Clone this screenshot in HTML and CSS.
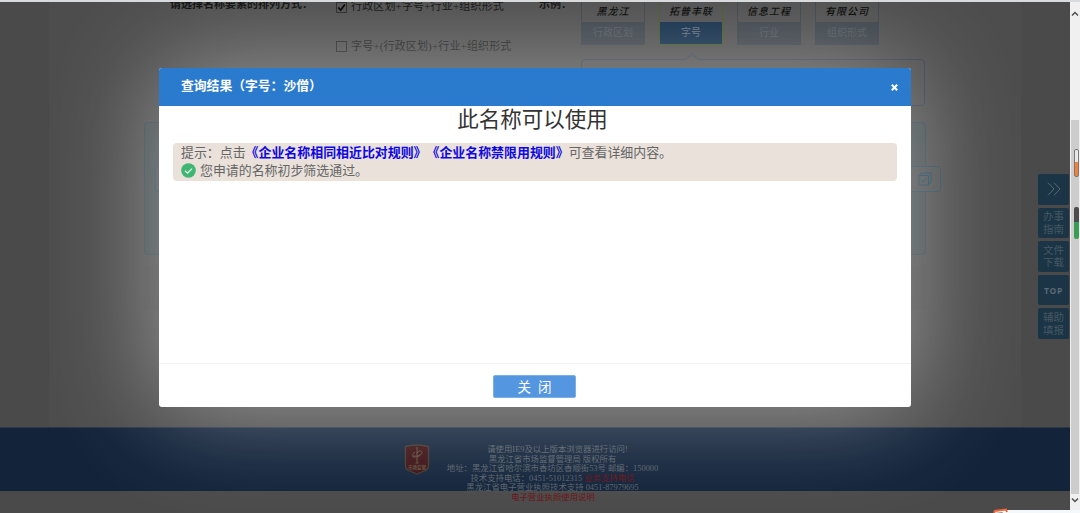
FILE: index.html
```html
<!DOCTYPE html>
<html lang="zh-CN">
<head>
  <meta charset="UTF-8">
  <title>企业名称查询</title>
  <link rel="stylesheet" href="styles.css">
</head>
<body>
  <div class="page">
    <div class="content">
      <div class="rule-row">
        <div class="rule-label">请选择名称要素的排列方式：</div>
        <div class="options">
          <div class="option">
            <svg class="check" viewBox="0 0 11 11"><rect x=".5" y=".5" width="10" height="10"/><path class="tick" d="M2.3 5.5l2.4 2.6 4.2-5.6"/></svg>
            <span>行政区划+字号+行业+组织形式</span>
          </div>
          <div class="option option-off">
            <svg class="check" viewBox="0 0 11 11"><rect x=".5" y=".5" width="10" height="10"/></svg>
            <span>字号+(行政区划)+行业+组织形式</span>
          </div>
        </div>
        <div class="example-label">示例：</div>
        <div class="cards">
          <div class="card"><b>黑龙江</b><span>行政区划</span></div>
          <div class="card active"><b>拓普丰联</b><span>字号</span></div>
          <div class="card"><b>信息工程</b><span>行业</span></div>
          <div class="card"><b>有限公司</b><span>组织形式</span></div>
        </div>
      </div>
      <svg class="callout" viewBox="0 0 344 53"><path d="M3 6.500h102l6-6 6 6h224l2.500 2.500v41l-2.500 2.500H3L.5 50V9z"/></svg>
      <div class="panel">
        <div class="name-input">
          <svg width="14" height="14" viewBox="0 0 14 14"><path d="M1 3.500h9.500V13H1zM3 3.500V1h10v10h-2.500M3.200 8l2 2.200L8.700 6"/></svg>
        </div>
      </div>
      <div class="panel-sub"></div>
    </div>
    <div class="footer">
      <svg class="badge" viewBox="0 0 26 31">
        <path class="shield" d="M1.500 2.500Q13-.5 24.500 2.500V22q0 3-3 4.500L13 30l-8.500-3.500q-3-1.500-3-4.500z"/>
        <path class="mark" d="M13 3v16M11 8.500c-3 1-4 3-1 3.500s8-1 8-3.500-4-2-5 1M8 12c2 2 8 1 9-2M11.500 19h3"/>
        <text x="13" y="24.500">市场监管</text>
      </svg>
      <div class="footer-text">
        <p class="browser">请使用IE9及以上版本浏览器进行访问!</p>
        <p>黑龙江省市场监督管理局 版权所有</p>
        <p>地址：黑龙江省哈尔滨市香坊区香顺街53号 邮编：150000</p>
        <p>技术支持电话：0451-51012315 <a>业务支持电话</a></p>
        <p>黑龙江省电子营业执照技术支持 0451-87979695</p>
      </div>
    </div>
    <div class="below"><a>电子营业执照使用说明</a></div>

    <div class="side-menu">
      <div><svg width="14" height="14" viewBox="0 0 14 14"><path d="M1 .7L7 7l-6 6.300M7 .7L13 7l-6 6.300"/></svg></div>
      <div>办事<br>指南</div>
      <div>文件<br>下载</div>
      <div class="top">TOP</div>
      <div>辅助<br>填报</div>
    </div>

    <div class="modal">
      <div class="modal-header">
        <span>查询结果（字号：沙僧）</span>
        <svg width="7" height="7" viewBox="0 0 7 7"><path d="M.8.8l5.400 5.400M6.200.8L.8 6.200"/></svg>
      </div>
      <div class="modal-body">
        <h1>此名称可以使用</h1>
        <div class="tip">
          <p>提示：点击<a>《企业名称相同相近比对规则》</a><a>《企业名称禁限用规则》</a>可查看详细内容。</p>
          <p class="pass"><svg width="15" height="15" viewBox="0 0 15 15"><circle cx="7.500" cy="7.500" r="7.300"/><path d="M4 7.700l2.500 2.400L11 5.600"/></svg>您申请的名称初步筛选通过。</p>
        </div>
      </div>
      <div class="modal-footer"><button>关 闭</button></div>
    </div>
  </div>

  <div class="scrollbar">
    <svg class="arrow" viewBox="0 0 10 6"><path d="M2 4.500l3-3 3 3"/></svg>
    <div class="thumb"></div>
    <svg class="arrow" viewBox="0 0 10 6"><path d="M2 1.500l3 3 3-3"/></svg>
  </div>
  <div class="gauge gauge-orange"></div>
  <div class="gauge gauge-green"></div>
  <svg class="ime" viewBox="0 0 88 5"><path class="ime-bar" d="M14 2h74v3H10z"/><path class="ime-logo" d="M2 5l1-2 11-1.500L15 4"/></svg>
</body>
</html>
```

FILE: styles.css
```css
* {
  box-sizing: border-box;
}
body {
  margin: 0;
  width: 1080px;
  height: 513px;
  overflow: hidden;
  position: relative;
  display: flex;
  border-top: 2px solid #d9dadb;
  background: #f0f0f0;
  font-family: "Liberation Serif", "Noto Sans CJK SC", serif;
  text-spacing-trim: space-all;
}
p, h1 {
  margin: 0;
  font-weight: normal;
}
svg {
  fill: none;
  flex: none;
}
.page {
  position: relative;
  width: 1070px;
  height: 511px;
  overflow: hidden;
  background: #4a4a4a;
}
.content {
  width: 972px;
  height: 425px;
  margin-left: 49px;
  background: #4d4d4d;
}

/* name rule */
.rule-row {
  display: flex;
  height: 51px;
  padding-left: 121px;
  font-size: 11px;
  line-height: 14px;
  color: #0c0c0c;
}
.rule-label,
.example-label {
  font-weight: bold;
  margin-top: -5px;
}
.rule-label {
  width: 166px;
}
.options {
  width: 203px;
  margin-top: -3px;
}
.option {
  display: flex;
  gap: 4px;
  height: 40px;
  white-space: nowrap;
  letter-spacing: .15px;
}
.option-off {
  color: #1c1c1c;
}
.check {
  width: 11px;
  height: 11px;
  margin-top: 3px;
  stroke: #262626;
}
.option-off .check {
  margin-top: 2px;
}
.check .tick {
  stroke: #000;
  stroke-width: 1.8;
}
.example-label {
  width: 42px;
}
.cards {
  display: flex;
  gap: 14px;
}
.card {
  width: 64px;
  height: 43px;
  border: 1px solid #3a4148;
  border-top: 0;
  background: #3a4148;
  text-align: center;
}
.card b {
  display: block;
  height: 20px;
  line-height: 17px;
  background: #4d4d4d;
  color: #000;
  font-family: "Noto Sans CJK SC", sans-serif;
  font-size: 10px;
  font-style: italic;
  font-weight: 500;
  letter-spacing: 1px;
}
.card span {
  display: block;
  line-height: 21px;
  font-size: 10px;
  color: #50565b;
}
.card.active {
  border: 1px solid #40591f;
  border-top: 0;
  background: #0f2b48;
}
.card.active span {
  color: #5f6d7a;
}
.callout {
  display: block;
  width: 344px;
  height: 53px;
  margin-left: 532px;
  stroke: #334153;
}
.panel {
  width: 782px;
  height: 133px;
  margin: 16px 0 0 95px;
  padding: 43px 0 0 10px;
  border: 1px solid #344a50;
  border-radius: 4px;
  background: #454d4f;
}
.name-input {
  display: flex;
  align-items: center;
  justify-content: flex-end;
  width: 786px;
  height: 26px;
  padding-right: 8px;
  border: 1px solid #2c4b5b;
  border-radius: 3px;
  background: #4c4e4f;
  stroke: #1c485e;
}
.panel-sub {
  width: 782px;
  height: 45px;
  margin: 10px 0 0 95px;
  background: #4b4b4b;
}

/* footer */
.footer {
  display: flex;
  height: 64px;
  padding-left: 404px;
  border-top: 1px solid #2c3743;
  background: #12233a;
  overflow: hidden;
}
.badge {
  width: 26px;
  height: 31px;
  margin-top: 16px;
}
.badge .shield {
  fill: #3b1013;
  stroke: #44382e;
  stroke-width: 1.3;
}
.badge .mark {
  stroke: #5f4c3e;
}
.badge text {
  font: bold 4.5px "Noto Sans CJK SC", sans-serif;
  fill: #5f4c3e;
  text-anchor: middle;
}
.footer-text {
  width: 245px;
  margin-top: 17px;
  text-align: center;
  font-size: 8.4px;
  line-height: 9.6px;
  color: #59626b;
  white-space: nowrap;
}
.footer-text .browser {
  padding-left: 10px;
}
.footer-text a,
.below a {
  color: #6b1015;
}
.below {
  height: 22px;
  padding-left: 36px;
  text-align: center;
  font-size: 8.4px;
  line-height: 14px;
}

/* quick links */
.side-menu {
  position: absolute;
  top: 172px;
  right: 1px;
  display: grid;
  gap: 3px;
}
.side-menu div {
  display: flex;
  align-items: center;
  justify-content: center;
  width: 31px;
  height: 30.6px;
  border-radius: 2px;
  background: #1b3546;
  color: #465763;
  font: 10.5px/12.5px "Noto Sans CJK SC", sans-serif;
  stroke: #586873;
}
.side-menu .top {
  font: bold 8.5px "Open Sans", sans-serif;
  letter-spacing: .7px;
  color: #5c6a74;
}

/* dialog */
.modal {
  position: absolute;
  top: 66px;
  left: 159px;
  display: flex;
  flex-direction: column;
  width: 752px;
  height: 339px;
  border-radius: 3px;
  background: #fff;
  box-shadow: 0 0 110px rgba(255, 255, 255, .46);
}
.modal-header {
  display: flex;
  align-items: center;
  justify-content: space-between;
  height: 38px;
  padding: 0 13px 0 22px;
  border-radius: 3px 3px 0 0;
  background: #2a7ace;
  color: #fff;
  font-size: 12.8px;
  font-weight: bold;
}
.modal-header span {
  margin-bottom: 5px;
}
.modal-header svg {
  margin-top: 1px;
  stroke: #fff;
  stroke-width: 2;
}
.modal-body {
  flex: 1;
  padding: 0 14px;
}
.modal-body h1 {
  height: 37px;
  padding-right: 5px;
  font-size: 21.5px;
  line-height: 29px;
  text-align: center;
  color: #333;
}
.tip {
  height: 38px;
  padding: 1px 8px;
  border-radius: 4px;
  background: #e9e1da;
  color: #666;
  font-size: 12.93px;
  line-height: 18px;
  white-space: nowrap;
}
.tip a {
  color: #0e06e4;
  font-weight: bold;
}
.pass {
  display: flex;
  align-items: center;
  gap: 4px;
}
.pass svg {
  margin-top: -1px;
}
.pass circle {
  fill: #3fb773;
}
.pass path {
  stroke: #e7f5ec;
  stroke-width: 1.3;
}
.modal-footer {
  height: 44px;
  padding: 11px 1px 0 0;
  border-top: 1px solid #f2f2f2;
}
.modal-footer button {
  display: block;
  width: 83px;
  height: 23px;
  margin: 0 auto;
  padding: 0 0 1px;
  border: 1px solid #7fade6;
  border-radius: 2px;
  background: #5596e0;
  color: #fff;
  font: 13.5px "Noto Sans CJK SC", sans-serif;
  word-spacing: 4px;
}

/* window edge */
.scrollbar {
  display: flex;
  flex-direction: column;
  width: 10px;
  height: 511px;
  padding: 9px 0;
}
.arrow {
  width: 10px;
  height: 6px;
  stroke: #505050;
  stroke-width: 1.5;
}
.thumb {
  height: 374px;
  margin: 103px 1px 3px;
  background: #cdcdcd;
}
.gauge {
  position: absolute;
  left: 1074px;
  width: 5px;
  border-radius: 2px;
}
.gauge-orange {
  top: 147px;
  height: 28px;
  border: 1px solid #777;
  background: linear-gradient(#e8e8e8 45%, #f58233 45%);
}
.gauge-green {
  top: 205px;
  height: 32px;
  background: linear-gradient(#4c4c4c 47%, #3b9c55 47%);
}
.ime {
  position: absolute;
  left: 992px;
  top: 506px;
  width: 88px;
  height: 5px;
}
.ime-bar {
  fill: #f5f8fb;
}
.ime-logo {
  fill: #fff;
  stroke: #f0683a;
  stroke-width: 2;
}
```
